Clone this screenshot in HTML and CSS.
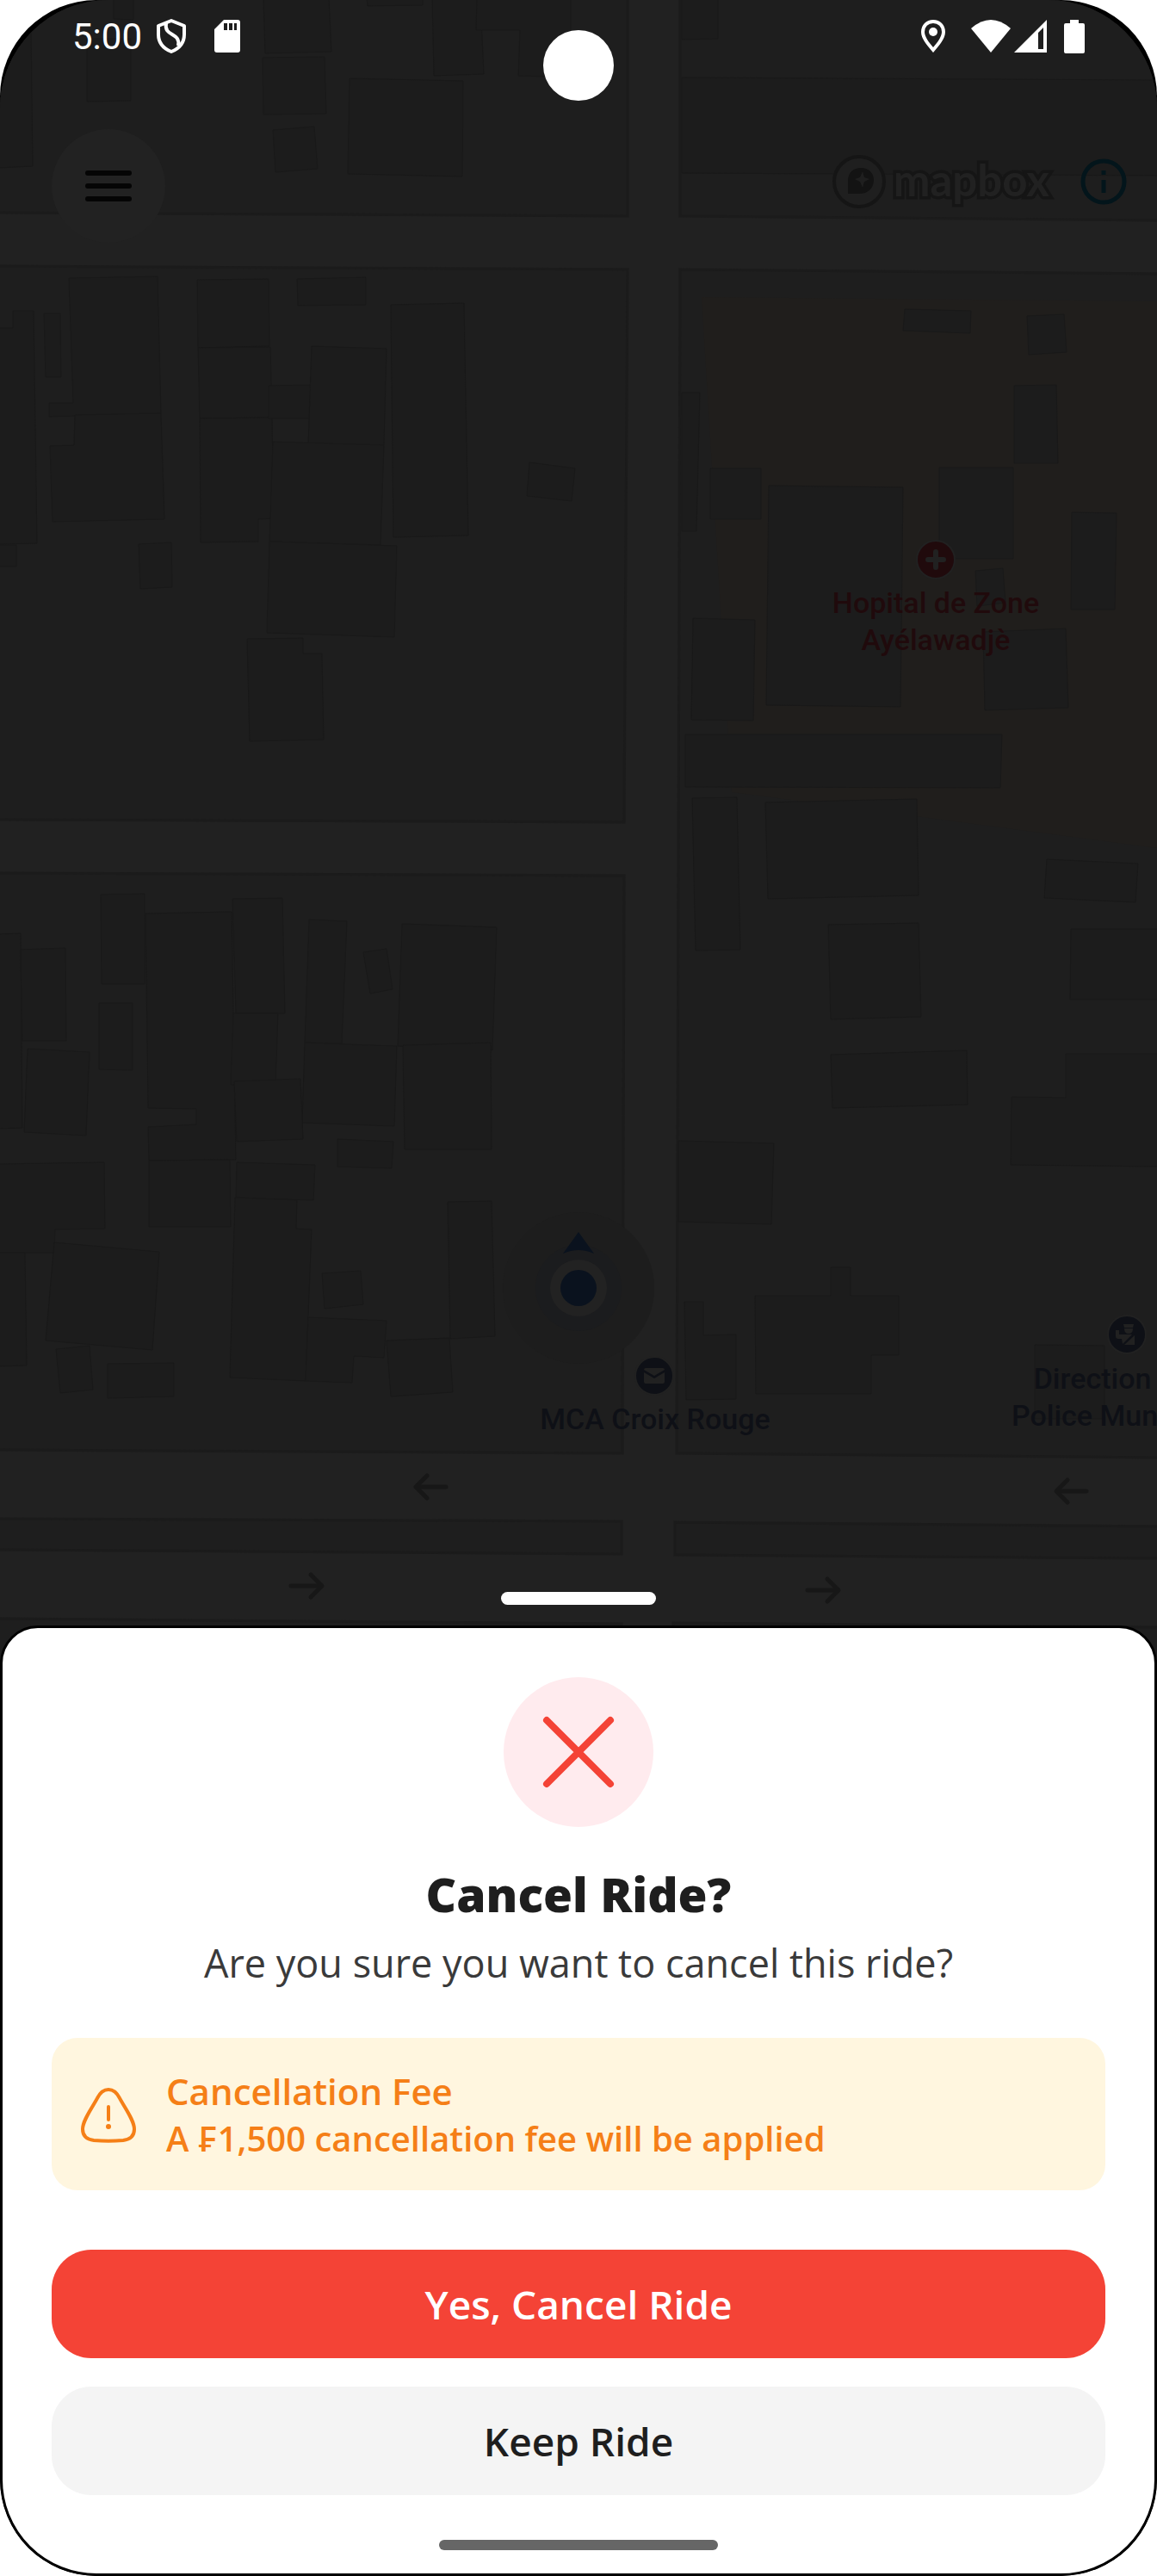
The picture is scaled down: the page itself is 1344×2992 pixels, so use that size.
FILE: index.html
```html
<!DOCTYPE html>
<html lang="en">
<head>
<meta charset="utf-8">
<meta name="viewport" content="width=device-width, initial-scale=1">
<title>Cancel Ride</title>
<link rel="stylesheet" href="styles.css">
</head>
<body>
<div class="device">
  <section class="map-area">
    <svg class="map" viewBox="0 0 1344 1928" preserveAspectRatio="xMidYMin slice" aria-hidden="true">
      <rect class="road" width="1344" height="1928"/>
      <g class="block">
        <path d="M-6-6H729V251L-6 247Z"/>
        <path d="M790-6H1350V256L790 251Z"/>
        <path d="M-6 309L729 313L725 955L-6 952Z"/>
        <path d="M790 313L1350 318V1693L786 1688Z"/>
        <path d="M-6 1014L725 1017L723 1688L-6 1684Z"/>
        <path d="M-6 1764L722 1767V1805L-6 1800Z"/>
        <path d="M784 1768L1350 1773V1810L784 1806Z"/>
        <path d="M-6 1880L722 1886V1940H-6Z"/>
        <path d="M782 1885L1350 1890V1940H782Z"/>
      </g>
      <path class="grounds" d="M815 345L1344 350V985L850 920Z"/>
      <g class="building">
        <path d="M132-2H155V23L132 22Z"/>
        <path d="M101 45H152V117L101 118Z"/>
        <path d="M-2 30H36L38 193L-2 195Z"/>
        <path d="M306-2H382L385 60L308 62Z"/>
        <path d="M305 67L377 66L379 132L306 133Z"/>
        <path d="M317 151L365 147L369 196L320 200Z"/>
        <path d="M406 91L538 94L537 205L404 202Z"/>
        <path d="M426-2H491V6L427 7Z"/>
        <path d="M502-2H558L562 86L504 88Z"/>
        <path d="M554-2H663V90L602 88L604 35H553Z"/>
        <path d="M792-2H834V45L792 46Z"/>
        <path d="M792 90L1346 93V204L792 201Z"/>
        <path d="M-2 381H15V361H39L43 631L-2 632Z"/>
        <path d="M-2 633H19V658H-2Z"/>
        <path d="M51 364H70L71 438H53Z"/>
        <path d="M80 323L183 321L187 480L57 484V468H85Z"/>
        <path d="M87 482L187 480L191 603L61 606L58 518L86 517Z"/>
        <path d="M229 325L312 324L313 402L230 404Z"/>
        <path d="M230 404L314 403L316 485L232 486Z"/>
        <path d="M232 486L316 485L318 602L300 603V629L233 630Z"/>
        <path d="M345 324L425 322V354L346 355Z"/>
        <path d="M312 448L367 447V486H312Z"/>
        <path d="M362 402L449 405L446 517L358 515Z"/>
        <path d="M317 513L446 517L442 633L313 629Z"/>
        <path d="M313 629L461 634L458 740L310 735Z"/>
        <path d="M454 354L539 352L544 622L457 624Z"/>
        <path d="M161 632L199 630L200 682L163 684Z"/>
        <path d="M615 537L668 544L664 582L612 576Z"/>
        <path d="M287 742L352 741V759H374L376 859L290 861Z"/>
        <path d="M1051 359L1128 361L1127 387L1049 384Z"/>
        <path d="M1193 367L1236 365L1239 409L1195 412Z"/>
        <path d="M792 456H813L809 617H792Z"/>
        <path d="M825 544H884V603H825Z"/>
        <path d="M1178 448L1227 447L1229 538H1178Z"/>
        <path d="M1091 543H1177V649H1091Z"/>
        <path d="M893 564L1049 566L1046 821L890 819Z"/>
        <path d="M1245 595L1297 596L1295 708H1244Z"/>
        <path d="M1133 663L1165 660L1168 700L1135 704Z"/>
        <path d="M805 718L877 720L875 837L803 836Z"/>
        <path d="M1142 734L1238 730L1241 822L1144 825Z"/>
        <path d="M796 853H1164L1162 915L796 914Z"/>
        <path d="M804 927L856 926L860 1103L808 1104Z"/>
        <path d="M889 932L1065 928L1067 1040L892 1044Z"/>
        <path d="M1216 998L1322 1003L1319 1048L1213 1043Z"/>
        <path d="M962 1074L1067 1072L1070 1181L965 1184Z"/>
        <path d="M1244 1079H1346V1161H1243Z"/>
        <path d="M965 1225L1123 1220L1124 1283L967 1287Z"/>
        <path d="M1175 1274L1238 1275V1224H1346V1355L1174 1353Z"/>
        <path d="M788 1325L899 1328L896 1422L788 1419Z"/>
        <path d="M877 1505H965V1472H988V1505H1044V1574H1012V1619H878Z"/>
        <path d="M795 1512H817V1551L855 1550V1625L797 1626Z"/>
        <path d="M1202 1562L1283 1563V1648H1202Z"/>
        <path d="M-2 1085L24 1084L26 1310L-2 1311Z"/>
        <path d="M24 1103L76 1101L77 1209H26Z"/>
        <path d="M117 1039L168 1038V1143H118Z"/>
        <path d="M115 1165H154V1243L115 1242Z"/>
        <path d="M32 1218L104 1222L100 1319L28 1315Z"/>
        <path d="M169 1061L269 1059L274 1347L173 1348L172 1309L228 1306V1288L172 1287Z"/>
        <path d="M270 1044L328 1043L331 1177H274Z"/>
        <path d="M271 1177H323L320 1261L268 1260Z"/>
        <path d="M359 1068L403 1070L397 1212L354 1211Z"/>
        <path d="M422 1106L449 1102L456 1149L430 1154Z"/>
        <path d="M467 1073L577 1077L572 1220L462 1215Z"/>
        <path d="M354 1211L461 1215L458 1308L351 1304Z"/>
        <path d="M468 1214L570 1211L571 1335H470Z"/>
        <path d="M272 1256L349 1253L352 1323L275 1326Z"/>
        <path d="M392 1323L457 1326L455 1357L392 1355Z"/>
        <path d="M173 1348L267 1347L268 1425H173Z"/>
        <path d="M-2 1352L121 1350L122 1427L64 1428L63 1455H-2Z"/>
        <path d="M63 1443L185 1454L177 1568L53 1557Z"/>
        <path d="M-2 1455H29L31 1586L-2 1587Z"/>
        <path d="M275 1350L366 1353L364 1394L274 1391Z"/>
        <path d="M273 1391L345 1394L344 1427L362 1428L355 1604L267 1600Z"/>
        <path d="M374 1479L419 1476L422 1515L377 1520Z"/>
        <path d="M358 1530L449 1534L446 1577L411 1575L409 1606L355 1604Z"/>
        <path d="M65 1567L104 1563L108 1614L70 1618Z"/>
        <path d="M125 1584L202 1583V1622L125 1624Z"/>
        <path d="M520 1396L571 1395L575 1552L523 1555Z"/>
        <path d="M449 1557L522 1554L526 1617L454 1622Z"/>
      </g>
      <g class="one-way">
        <path d="M518 1727H484M496 1714L483 1727L496 1740"/>
        <path d="M338 1842H372M361 1829L374 1842L361 1855"/>
        <path d="M1262 1732H1228M1240 1719L1227 1732L1240 1745"/>
        <path d="M938 1847H972M961 1834L974 1847L961 1860"/>
      </g>
      <g class="position">
        <circle class="position-accuracy" cx="672" cy="1496" r="88"/>
        <circle class="position-halo" cx="672" cy="1496" r="50"/>
        <circle class="position-ring" cx="672" cy="1496" r="33"/>
        <path class="position-dot" d="M672 1431L690 1456Q672 1448 654 1456Z"/>
        <circle class="position-dot" cx="672" cy="1496" r="21"/>
      </g>
      <g class="poi poi-health">
        <circle cx="1087" cy="650" r="22"/>
        <path class="poi-stroke" d="M1087 641V659M1078 650H1096"/>
        <text x="1087" y="712">Hopital de Zone</text>
        <text x="1087" y="755">Ayélawadjè</text>
      </g>
      <g class="poi">
        <circle cx="760" cy="1598" r="22"/>
        <path class="poi-glyph" d="M748 1591Q748 1589 750 1589H770Q772 1589 772 1591L760 1598ZM748 1594L760 1601L772 1594V1605Q772 1607 770 1607H750Q748 1607 748 1605Z"/>
        <text x="761" y="1660">MCA Croix Rouge</text>
      </g>
      <g class="poi">
        <circle cx="1309" cy="1550" r="22"/>
        <path class="poi-glyph" d="M1305 1538H1317L1316 1542H1306ZM1306 1543H1316Q1316 1549 1311 1549Q1306 1549 1306 1543ZM1296 1545H1300V1550H1315L1304 1561L1303 1555H1299Q1296 1555 1296 1552ZM1318 1551V1562H1306Z"/>
        <text x="1269" y="1613">Direction</text>
        <text class="poi-start" x="1175" y="1656">Police Mun</text>
      </g>
    </svg>

    <header class="status-bar">
      <span class="clock">5:00</span>
      <svg class="shield" width="36" height="42" viewBox="0 0 36 42" aria-hidden="true"><path d="M18 3L33 9V19C33 28 28 35 18 39C8 35 3 28 3 19V9ZM12 6C9 22 29 16 26 32"/></svg>
      <svg class="sd" width="30" height="38" viewBox="0 0 30 38" aria-hidden="true"><path fill-rule="evenodd" d="M11 0H27Q30 0 30 3V35Q30 38 27 38H3Q0 38 0 35V11ZM11 4V12H15V4ZM17 4V12H21V4ZM23 4V12H26V4Z"/></svg>
      <span class="spacer"></span>
      <svg class="pin" width="28" height="38" viewBox="0 0 28 38" aria-hidden="true"><path class="pin-line" d="M14 2C7 2 2 7 2 14C2 21 8 28 14 35C20 28 26 21 26 14C26 7 21 2 14 2Z"/><circle cx="14" cy="14" r="5"/></svg>
      <svg class="wifi" width="46" height="38" viewBox="0 0 46 38" aria-hidden="true"><path d="M0 10Q23 -10 46 10L23 38Z"/></svg>
      <svg class="signal" width="38" height="38" viewBox="0 0 38 38" aria-hidden="true"><path fill-rule="evenodd" d="M38 0V38H0ZM34 9L28 15V34H34Z"/></svg>
      <svg class="battery" width="24" height="40" viewBox="0 0 24 40" aria-hidden="true"><path d="M7 1H17V5H22Q24 5 24 7V38Q24 40 22 40H2Q0 40 0 38V7Q0 5 2 5H7Z"/></svg>
      <span class="camera"></span>
    </header>

    <div class="map-bar">
      <button class="menu" type="button" aria-label="Menu"><svg width="54" height="36" viewBox="0 0 54 36"><path d="M3 3H51M3 18H51M3 33H51"/></svg></button>
      <a class="brand" href="#">
        <svg width="64" height="64" viewBox="0 0 64 64" aria-hidden="true"><circle class="brand-ring" cx="32" cy="32" r="29"/><path class="brand-mark" fill-rule="evenodd" d="M19 46V31C19 21 26 16 34 16C43 16 49 22 49 30C49 40 42 46 32 46ZM36 20L33 27L27 29L33 32L36 39L38 32L44 29L38 27Z"/></svg>
        <span class="brand-name">mapbox</span>
      </a>
      <button class="info" type="button" aria-label="Map information"><svg width="54" height="54" viewBox="0 0 54 54"><circle cx="27" cy="27" r="24"/><path d="M27 14V19M27 25V40"/></svg></button>
    </div>
    <span class="handle"></span>
  </section>

  <main class="sheet" role="dialog" aria-labelledby="sheet-title">
    <div class="badge"><svg width="84" height="84" viewBox="0 0 84 84" aria-hidden="true"><path d="M5 5L79 79M79 5L5 79"/></svg></div>
    <h1 class="title" id="sheet-title">Cancel Ride?</h1>
    <p class="question">Are you sure you want to cancel this ride?</p>
    <div class="fee">
      <svg width="66" height="66" viewBox="0 0 66 66" aria-hidden="true"><path d="M33 4C27 4 23 8 20 14C13 27 3 40 3 50C3 58 8 62 16 63C27 64 39 64 50 63C58 62 63 58 63 50C63 40 53 27 46 14C43 8 39 4 33 4Z"/><path d="M33 24V39"/><circle cx="33" cy="47" r="3"/></svg>
      <div class="fee-text">
        <h2 class="fee-title">Cancellation Fee</h2>
        <p class="fee-note">A ₣1,500 cancellation fee will be applied</p>
      </div>
    </div>
    <div class="actions">
      <button class="button button-danger" type="button">Yes, Cancel Ride</button>
      <button class="button" type="button">Keep Ride</button>
    </div>
    <span class="home-indicator"></span>
  </main>
</div>
</body>
</html>
```
FILE: styles.css
```css
* { box-sizing: border-box; }

body {
  margin: 0;
  background: #fff;
  font-family: "Open Sans", "Noto Sans", sans-serif;
  color: #1e1e1e;
}

h1, h2, p { margin: 0; }

button {
  border: 0;
  padding: 0;
  font: inherit;
  color: inherit;
}

.device {
  display: flex;
  flex-direction: column;
  min-height: 100vh;
  background: #000;
  border-radius: 112px;
  overflow: hidden;
}

/* Map */
.map-area {
  position: relative;
  display: flex;
  flex-direction: column;
  flex: 1;
  min-height: 800px;
  padding-bottom: 64px;
  border-radius: 126px 126px 0 0;
  overflow: hidden;
}

.map {
  position: absolute;
  inset: 0;
  width: 100%;
  height: 100%;
}

.road { fill: #212121; }
.block { fill: #1e1e1e; stroke: #1b1b1b; stroke-width: 3; }
.grounds { fill: #201e1c; }
.building { fill: #1c1c1c; stroke: #191919; stroke-width: 1; }
.one-way { fill: none; stroke: #171717; stroke-width: 5; stroke-linecap: round; stroke-linejoin: round; }
.position-accuracy { fill: #1d1d1d; }
.position-halo { fill: #1b1c1e; }
.position-ring { fill: #222; }
.position-dot { fill: #0a121e; }

.poi {
  fill: #0e1016;
  font-family: Roboto, sans-serif;
  font-size: 34px;
  font-weight: 500;
  text-anchor: middle;
}
.poi circle { stroke: #212121; stroke-width: 2; }
.poi-health { fill: #200a0c; }
.poi-glyph { fill: #212121; }
.poi-stroke { fill: none; stroke: #212121; stroke-width: 6; stroke-linecap: round; }
.poi-start { text-anchor: start; }

/* Status bar */
.status-bar {
  position: relative;
  display: flex;
  align-items: center;
  height: 84px;
  padding: 0 84px;
  color: #fff;
  fill: #fff;
  font-family: Roboto, sans-serif;
  font-size: 42px;
}
.shield { margin-left: 16px; fill: none; stroke: #fff; stroke-width: 4; stroke-linejoin: round; }
.sd { margin-left: 32px; }
.spacer { flex: 1; }
.pin-line { fill: none; stroke: #fff; stroke-width: 4; }
.wifi { margin-left: 30px; }
.signal { margin-left: 4px; }
.battery { margin-left: 20px; }
.camera {
  position: absolute;
  top: 35px;
  left: 50%;
  width: 82px;
  height: 82px;
  margin-left: -41px;
  border-radius: 50%;
  background: #fff;
}

/* Controls over the map */
.map-bar {
  position: relative;
  display: flex;
  align-items: center;
  height: 132px;
  margin-top: 66px;
  padding: 0 35px 0 60px;
}
.menu {
  display: grid;
  place-items: center;
  width: 132px;
  height: 132px;
  margin-right: auto;
  border-radius: 50%;
  background: #222;
}
.menu path { stroke: #050505; stroke-width: 6; stroke-linecap: round; }
.brand {
  display: flex;
  gap: 8px;
  margin: 0 36px 10px 0;
  color: #212121;
  text-decoration: none;
}
.brand-ring { fill: #1f1f1f; stroke: #151515; stroke-width: 4; }
.brand-mark { fill: #131313; }
.brand-name {
  font-family: Lato, sans-serif;
  font-size: 51px;
  line-height: 60px;
  font-weight: 700;
  -webkit-text-stroke: 7px #151515;
  paint-order: stroke fill;
}
.info { display: flex; margin-bottom: 10px; background: none; }
.info svg { fill: none; stroke: #03151b; stroke-width: 5; }

.handle {
  position: relative;
  width: 180px;
  height: 15px;
  margin: auto auto 0;
  border-radius: 8px;
  background: #fff;
}

/* Bottom sheet */
.sheet {
  position: relative;
  display: flex;
  flex-direction: column;
  margin-top: -40px;
  padding: 57px 57px 27px;
  border: 3px solid #000;
  border-radius: 44px 44px 112px 112px;
  background: #fff;
}
.badge {
  display: grid;
  place-items: center;
  align-self: center;
  width: 174px;
  height: 174px;
  border-radius: 50%;
  background: #ffebee;
}
.badge path { stroke: #f44336; stroke-width: 8; stroke-linecap: round; }
.title {
  margin-top: 44px;
  font-size: 55px;
  line-height: 68px;
  font-weight: 800;
  text-align: center;
}
.question {
  margin-top: 18px;
  font-size: 45px;
  line-height: 56px;
  font-weight: 400;
  color: #3a3a3a;
  text-align: center;
}
.fee {
  display: flex;
  align-items: center;
  gap: 34px;
  margin-top: 59px;
  padding: 34px 33px 33px;
  border-radius: 30px;
  background: #fff6df;
  color: #f57f17;
}
.fee svg { flex: none; fill: none; stroke: currentColor; stroke-width: 4; stroke-linecap: round; }
.fee circle { fill: currentColor; stroke: none; }
.fee-title { font-size: 42px; line-height: 56px; font-weight: 600; }
.fee-note { font-size: 40px; line-height: 54px; font-weight: 600; }
.actions {
  display: flex;
  flex-direction: column;
  gap: 33px;
  margin-top: 69px;
}
.button {
  height: 126px;
  border-radius: 46px;
  background: #f4f4f4;
  font-size: 46px;
  font-weight: 600;
}
.button-danger { background: #f44336; color: #fff; }
.home-indicator {
  align-self: center;
  width: 324px;
  height: 12px;
  margin-top: 52px;
  border-radius: 6px;
  background: #666;
}
```
